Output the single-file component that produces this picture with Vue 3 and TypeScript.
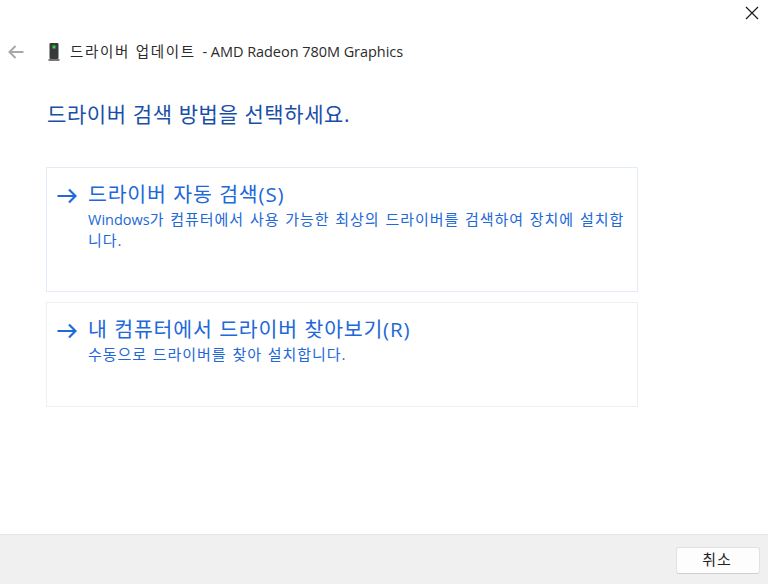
<script setup lang="ts">
const options = [
  {
    title: '드라이버 자동 검색(S)',
    prefix: 'Windows',
    lines: ['가 컴퓨터에서 사용 가능한 최상의 드라이버를 검색하여 장치에 설치합', '니다.'],
    cls: 'first',
  },
  {
    title: '내 컴퓨터에서 드라이버 찾아보기(R)',
    prefix: '',
    lines: ['수동으로 드라이버를 찾아 설치합니다.'],
    cls: 'second',
  },
]
</script>

<template>
  <div class="win">
    <div class="top">
      <svg class="close" width="14" height="14" viewBox="0 0 14 14"><path d="M1 1 13 13M13 1 1 13" stroke="#1a1a1a" stroke-width="1.2" fill="none" /></svg>
    </div>
    <div class="head">
      <svg class="back" width="16" height="14" viewBox="0 0 16 14"><path d="M15.500 7H1.500M7.500 1 1.500 7l6 6" stroke="#a8a8a8" stroke-width="2" fill="none" /></svg>
      <svg class="dev" width="14" height="20" viewBox="0 0 14 20">
        <rect x="2.500" y="1" width="9" height="16" rx="1" fill="#3a3a3a" />
        <rect x="5.500" y="3.500" width="3" height="3" fill="#25d84a" />
        <rect x="1.500" y="17" width="11" height="2" fill="#777" />
      </svg>
      <span class="caption"><span class="ko">드라이버 업데이트</span> - AMD Radeon 780M Graphics</span>
    </div>
    <h1 class="title">드라이버 검색 방법을 선택하세요.</h1>
    <div class="list">
      <div v-for="o in options" :key="o.title" class="opt" :class="o.cls">
        <svg class="arrow" width="20" height="16" viewBox="0 0 20 16"><path d="M0.500 8H18.500M12 1.500 18.500 8 12 14.500" stroke="#2168d8" stroke-width="2.200" fill="none" /></svg>
        <div class="txt">
          <div class="t">{{ o.title }}</div>
          <div class="d">
            <div v-for="(line, i) in o.lines" :key="i" class="line"><span v-if="i === 0 && o.prefix" class="lat">{{ o.prefix }}</span>{{ line }}</div>
          </div>
        </div>
      </div>
    </div>
    <div class="foot">
      <button class="btn">취소</button>
    </div>
  </div>
</template>

<style scoped>
.win {
  width: 768px;
  height: 584px;
  background: #fff;
  display: flex;
  flex-direction: column;
  font-family: "Open Sans", "Noto Sans CJK KR", sans-serif;
  overflow: hidden;
}
.top {
  height: 38px;
  display: flex;
  justify-content: flex-end;
  padding: 6px 9px 0 0;
  box-sizing: border-box;
}
.head {
  height: 28px;
  display: flex;
  align-items: center;
  padding-left: 8px;
}
.back { margin-right: 23px; }
.dev { margin-right: 9px; }
.caption {
  font-size: 14.500px;
  line-height: 26px;
  letter-spacing: -0.05px;
  color: #2b2b2b;
  white-space: nowrap;
}
.ko {
  letter-spacing: 1.700px;
  margin-right: 3px;
}
.title {
  margin: 33px 0 0 47px;
  font-size: 21px;
  line-height: 30px;
  letter-spacing: 0.6px;
  font-weight: 400;
  color: #1a4fa8;
}
.list {
  margin: 38px 0 0 46px;
  width: 592px;
  display: flex;
  flex-direction: column;
  gap: 10px;
}
.opt {
  display: flex;
  box-sizing: border-box;
  padding: 12px 10px 0 10px;
}
.first { height: 125px; border: 1px solid #e3edf7; }
.second { height: 105px; border: 1px solid #efefef; }
.arrow { margin: 8px 11px 0 0; flex: none; }
.t {
  font-size: 20.500px;
  line-height: 28px;
  letter-spacing: 0.8px;
  word-spacing: 0.5px;
  color: #2168d8;
}
.d {
  font-size: 15px;
  line-height: 20px;
  letter-spacing: 0.950px;
  word-spacing: 1px;
  margin-top: 1px;
  color: #2168d8;
}
.line { white-space: nowrap; }
.lat {
  font-size: 14.500px;
  letter-spacing: 0;
}
.txt { flex: 1; min-width: 0; }
.foot {
  margin-top: auto;
  height: 50px;
  background: #f0f0f0;
  border-top: 1px solid #e6e6e6;
  box-sizing: border-box;
  display: flex;
  justify-content: flex-end;
  padding: 12px 8px 0 0;
}
.btn {
  width: 84px;
  height: 27px;
  background: #fdfdfd;
  border: 1px solid #e2e2e2;
  border-bottom-color: #cfcfcf;
  border-radius: 3px;
  font: inherit;
  font-size: 15px;
  line-height: 22px;
  letter-spacing: 1px;
  color: #222;
  padding: 0 2px 3px 0;
}
</style>
